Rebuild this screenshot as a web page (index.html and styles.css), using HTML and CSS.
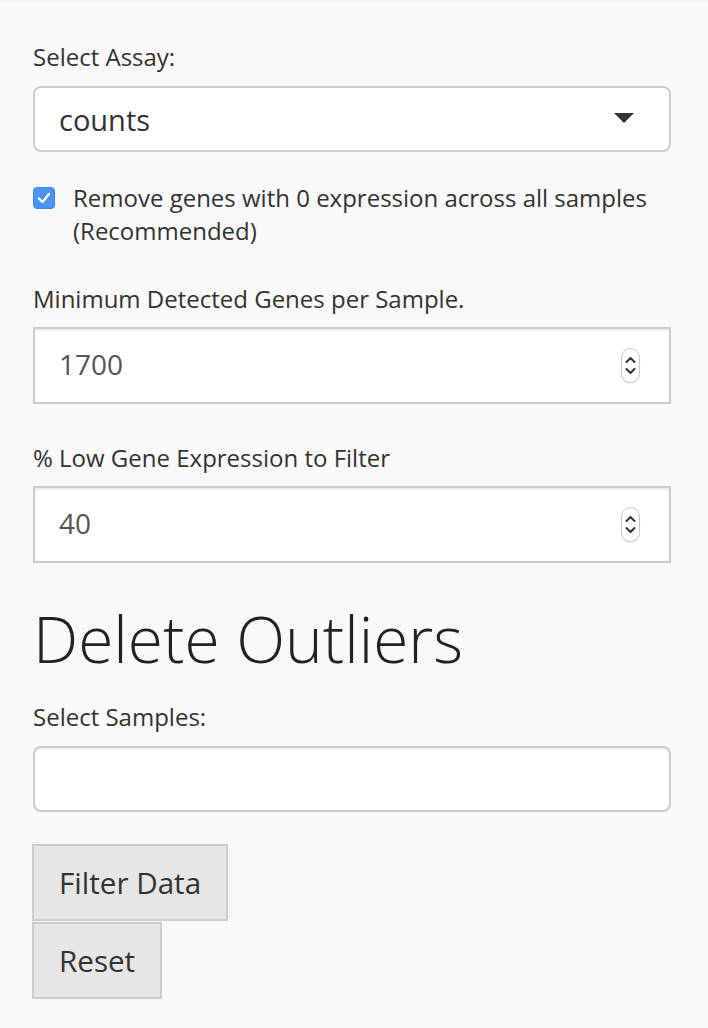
FILE: index.html
```html
<!DOCTYPE html>
<html>
<head>
<meta charset="utf-8">
<link rel="stylesheet" href="styles.css">
</head>
<body>
<div class="sidebar">
  <div class="field">
    <label class="label">Select Assay:</label>
    <div class="select">
      <span class="select-value">counts</span>
      <span class="caret"></span>
    </div>
  </div>

  <div class="check-row">
    <span class="checkbox">
      <svg width="14" height="12" viewBox="0 0 14 12"><path d="M2 6.5 L5.5 10 L12 2" fill="none" stroke="#fff" stroke-width="2.4" stroke-linecap="round" stroke-linejoin="round"/></svg>
    </span>
    <span class="check-text">Remove genes with 0 expression across all samples (Recommended)</span>
  </div>

  <div class="field field-num">
    <label class="label">Minimum Detected Genes per Sample.</label>
    <div class="number">
      <span class="number-value">1700</span>
      <span class="spinner">
        <svg width="19" height="35" viewBox="0 0 19 35"><path d="M5.5 14 L9.5 10 L13.5 14" fill="none" stroke="#333" stroke-width="2" stroke-linecap="round" stroke-linejoin="round"/><path d="M5.5 21 L9.5 25 L13.5 21" fill="none" stroke="#333" stroke-width="2" stroke-linecap="round" stroke-linejoin="round"/></svg>
      </span>
    </div>
  </div>

  <div class="field field-num2">
    <label class="label">% Low Gene Expression to Filter</label>
    <div class="number">
      <span class="number-value">40</span>
      <span class="spinner">
        <svg width="19" height="35" viewBox="0 0 19 35"><path d="M5.5 14 L9.5 10 L13.5 14" fill="none" stroke="#333" stroke-width="2" stroke-linecap="round" stroke-linejoin="round"/><path d="M5.5 21 L9.5 25 L13.5 21" fill="none" stroke="#333" stroke-width="2" stroke-linecap="round" stroke-linejoin="round"/></svg>
      </span>
    </div>
  </div>

  <h1 class="heading">Delete Outliers</h1>

  <div class="field">
    <label class="label">Select Samples:</label>
    <div class="selectize"></div>
  </div>

  <div class="buttons">
    <button class="btn">Filter Data</button>
    <button class="btn">Reset</button>
  </div>
</div>
</body>
</html>
```
FILE: styles.css
```css
html, body {
  margin: 0;
  padding: 0;
}
body {
  background: #f9f9f9;
  font-family: "Open Sans", "Noto Sans", sans-serif;
  color: #333;
  height: 1028px;
  border-top: 1px solid #f0f0f0;
  box-sizing: border-box;
}
.sidebar {
  padding: 39px 37px 0 33px;
  display: flex;
  flex-direction: column;
}
.label {
  display: block;
  font-size: 24px;
  line-height: 33px;
  margin-bottom: 13px;
}
.select {
  height: 66px;
  box-sizing: border-box;
  border: 2px solid #ccc;
  border-radius: 8px;
  background: #fff;
  display: flex;
  align-items: center;
  justify-content: space-between;
  padding: 0 35px 0 24px;
}
.select-value {
  font-size: 29px;
}
.caret {
  width: 0;
  height: 0;
  border-left: 10px solid transparent;
  border-right: 10px solid transparent;
  border-top: 10px solid #333;
  margin-top: -3px;
}
.check-row {
  display: flex;
  align-items: flex-start;
  gap: 18px;
  margin-top: 29px;
}
.checkbox {
  flex: none;
  width: 22px;
  height: 22px;
  box-sizing: border-box;
  margin-top: 6px;
  background: #4b93f5;
  border: 1px solid #3d86ea;
  border-radius: 4px;
  display: flex;
  align-items: center;
  justify-content: center;
}
.check-text {
  font-size: 24px;
  line-height: 33px;
  padding-right: 20px;
}
.field-num {
  margin-top: 35px;
}
.field-num .label,
.field-num2 .label {
  margin-bottom: 12px;
}
.field-num2 {
  margin-top: 37px;
}
.number {
  height: 77px;
  box-sizing: border-box;
  border: 2px solid #ccc;
  background: #fff;
  box-shadow: inset 0 2px 2px rgba(0,0,0,0.075);
  display: flex;
  align-items: center;
  justify-content: space-between;
  padding: 0 29px 0 24px;
}
.number-value {
  font-size: 28px;
  color: #555;
  margin-top: -4px;
}
.spinner {
  width: 19px;
  height: 35px;
  box-sizing: border-box;
  border: 1px solid #c8c8c8;
  border-radius: 10px;
  background: #fff;
  box-shadow: 0 1px 1px rgba(0,0,0,0.08);
  display: flex;
  align-items: center;
  justify-content: center;
  position: relative;
}
.spinner svg {
  position: absolute;
  left: -1px;
  top: -1px;
}
.heading {
  font-size: 64px;
  font-weight: 300;
  line-height: 70px;
  margin: 41px 0 26px 0;
  color: #222;
}
.selectize {
  height: 66px;
  box-sizing: border-box;
  border: 2px solid #ccc;
  border-radius: 8px;
  background: #fff;
  box-shadow: inset 0 2px 2px rgba(0,0,0,0.05);
}
.buttons {
  display: flex;
  flex-direction: column;
  align-items: flex-start;
  gap: 1px;
  margin-top: 32px;
  margin-left: -1px;
}
.btn {
  font-family: "Open Sans", "Noto Sans", sans-serif;
  font-size: 29.6px;
  color: #333;
  background: #e6e6e6;
  border: 2px solid #ccc;
  border-radius: 0;
  height: 77px;
  padding: 0 25px;
  margin: 0;
  line-height: 1;
}
```
